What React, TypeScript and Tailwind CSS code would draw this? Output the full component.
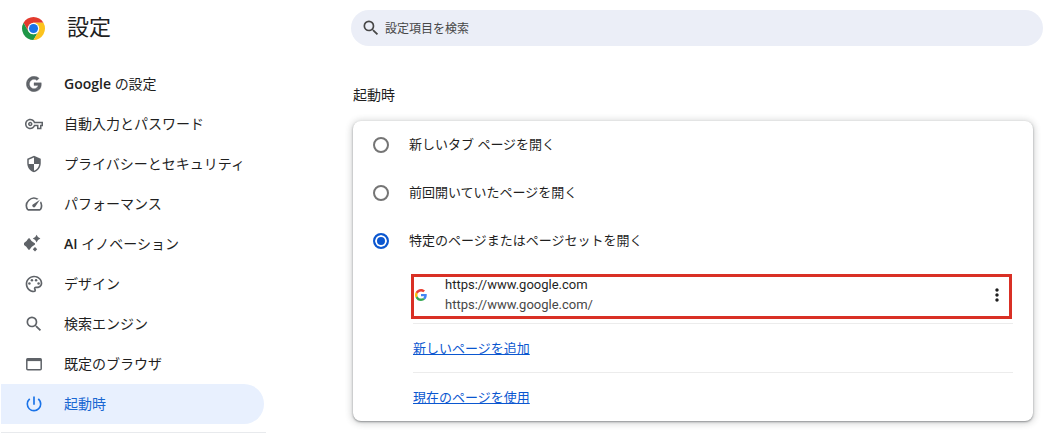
import React, { useState } from 'react';
import {
    MdMoreVert,
    MdOutlinePalette,
    MdOutlineVpnKey,
    MdPowerSettingsNew,
    MdSearch,
    MdSecurity,
    MdSpeed
} from 'react-icons/md';

const ChromeLogo: React.FC = () => (
    <svg viewBox="2 2 44 44" className="w-[23px] h-[23px] shrink-0" aria-hidden="true">
        <path fill="#e33b2e" d="M4.95 13A22 22 0 0 1 43.05 13H24L14.47 29.5z" />
        <path fill="#1e9647" d="M4.95 13L14.47 29.5A11 11 0 0 0 33.53 29.5L24 46A22 22 0 0 1 4.95 13z" />
        <path fill="#fcc31e" d="M43.05 13A22 22 0 0 1 24 46L33.53 29.5L24 13z" />
        <circle cx="24" cy="24" r="11" fill="#fff" />
        <circle cx="24" cy="24" r="8.7" fill="#1a73e8" />
    </svg>
);

const GoogleLogo: React.FC<{ mono?: boolean; className: string }> = ({ mono, className }) => (
    <svg
        viewBox={mono ? '-1 -1 50 50' : '0 0 48 48'}
        className={className}
        stroke={mono ? '#5f6368' : 'none'}
        strokeWidth="1"
        aria-hidden="true"
    >
        <path fill={mono ? '#5f6368' : '#EA4335'} d="M24 9.5c3.54 0 6.71 1.22 9.21 3.6l6.85-6.85C35.9 2.38 30.47 0 24 0 14.62 0 6.51 5.38 2.56 13.22l7.98 6.19C12.43 13.72 17.74 9.5 24 9.5z" />
        <path fill={mono ? '#5f6368' : '#4285F4'} d="M46.98 24.55c0-1.57-.15-3.09-.38-4.55H24v9.02h12.94c-.58 2.96-2.26 5.48-4.78 7.18l7.73 6c4.51-4.18 7.09-10.36 7.09-17.65z" />
        <path fill={mono ? '#5f6368' : '#FBBC05'} d="M10.53 28.59c-.48-1.45-.76-2.99-.76-4.59s.27-3.14.76-4.59l-7.98-6.19C.92 16.46 0 20.12 0 24c0 3.88.92 7.54 2.56 10.78l7.97-6.19z" />
        <path fill={mono ? '#5f6368' : '#34A853'} d="M24 48c6.48 0 11.93-2.13 15.89-5.81l-7.73-6c-2.15 1.45-4.92 2.3-8.16 2.3-6.26 0-11.57-4.22-13.47-9.91l-7.98 6.19C6.51 42.62 14.62 48 24 48z" />
    </svg>
);

const SparkIcon: React.FC = () => (
    <svg viewBox="0 0 20 20" className="w-5 h-5" fill="currentColor" aria-hidden="true">
        <path d="M5 5.2Q6.8 8.7 10 10Q6.8 11.3 5 14.8Q3.2 11.3 0 10Q3.2 8.7 5 5.2z" stroke="currentColor" strokeWidth="2" strokeLinejoin="round" />
        <path d="M12.6 .8Q13.5 3.7 16.4 4.6Q13.5 5.5 12.6 8.4Q11.7 5.5 8.8 4.6Q11.7 3.7 12.6 .8z" />
        <path d="M11 13L13.2 15.2L11 17.4L8.8 15.2z" />
    </svg>
);

const BrowserIcon: React.FC = () => (
    <svg viewBox="0 0 20 20" className="w-5 h-5" aria-hidden="true">
        <rect x="2.8" y="4.8" width="14.4" height="10.9" rx="1" fill="none" stroke="currentColor" strokeWidth="1.5" />
        <path d="M2.8 4.5h14.4v2.6H2.8z" fill="currentColor" />
    </svg>
);

const menuItems = [
    { latin: 'Google ', label: 'の設定', icon: <GoogleLogo mono className="w-4 h-4" /> },
    { label: '自動入力とパスワード', icon: <MdOutlineVpnKey size={18} /> },
    { label: 'プライバシーとセキュリティ', icon: <MdSecurity size={18} /> },
    { label: 'パフォーマンス', icon: <MdSpeed size={20} /> },
    { latin: 'AI ', label: 'イノベーション', icon: <SparkIcon /> },
    { label: 'デザイン', icon: <MdOutlinePalette size={20} /> },
    { label: '検索エンジン', icon: <MdSearch size={20} /> },
    { label: '既定のブラウザ', icon: <BrowserIcon /> },
    { label: '起動時', icon: <MdPowerSettingsNew size={20} /> }
];

const startupOptions = [
    '新しいタブ ページを開く',
    '前回開いていたページを開く',
    '特定のページまたはページセットを開く'
];

const App: React.FC = () => {
    const [activeItem, setActiveItem] = useState('起動時');
    const [selected, setSelected] = useState(2);
    const [query, setQuery] = useState('');

    return (
        <div className="flex min-h-screen bg-white text-[#1f1f1f] font-['Open_Sans','Noto_Sans_CJK_JP',sans-serif]">
            {/* Sidebar */}
            <aside className="w-[266px] shrink-0">
                <div className="flex items-center gap-[22px] h-14 pl-[22px]">
                    <ChromeLogo />
                    <h1 className="pb-1 text-[22px] leading-8">設定</h1>
                </div>
                <nav className="mt-2 pb-2 ml-px border-b border-[#e8eaed]">
                    {menuItems.map((item) => (
                        <a
                            key={item.label}
                            href="#"
                            onClick={(e) => {
                                e.preventDefault();
                                setActiveItem(item.label);
                            }}
                            className={`flex items-center gap-5 h-10 mr-0.5 pl-[23px] rounded-r-full text-sm ${activeItem === item.label
                                ? 'bg-[#e8f0fe] text-[#1967d2]'
                                : 'text-[#1f1f1f]'
                                }`}
                        >
                            <span className={`flex w-5 shrink-0 justify-center ${activeItem === item.label ? 'text-[#1a73e8]' : 'text-[#5f6368]'}`}>
                                {item.icon}
                            </span>
                            <span>
                                {item.latin && <span className="font-semibold">{item.latin}</span>}
                                {item.label}
                            </span>
                        </a>
                    ))}
                </nav>
            </aside>

            {/* Content */}
            <main className="flex-1 pl-[85px] pr-0.5 pt-2.5">
                <label className="flex items-center gap-1 h-9 pl-2.5 pr-4 rounded-full bg-[#ebeef7] text-[#474747]">
                    <MdSearch size={20} className="shrink-0" />
                    <input
                        type="text"
                        value={query}
                        onChange={(e) => setQuery(e.target.value)}
                        placeholder="設定項目を検索"
                        aria-label="設定項目を検索"
                        className="flex-1 pt-0.5 bg-transparent text-xs outline-none placeholder:text-[#474747]"
                    />
                </label>

                <section className="ml-0.5 mr-2.5">
                    <h2 className="pt-[39px] pb-4 text-sm leading-5">起動時</h2>
                    <div className="pl-5 rounded-lg bg-white text-[13px] shadow-[0_1px_2px_rgba(60,64,67,0.5),0_1px_6px_2px_rgba(60,64,67,0.2)]">
                        {startupOptions.map((option, index) => (
                            <label key={option} className="flex items-center gap-5 h-12">
                                <input
                                    type="radio"
                                    name="startup"
                                    checked={selected === index}
                                    onChange={() => setSelected(index)}
                                    className="appearance-none w-4 h-4 rounded-full border-2 border-[#757575] checked:border-[#0b57d0] checked:bg-[#0b57d0] checked:shadow-[inset_0_0_0_2px_#fff]"
                                />
                                {option}
                            </label>
                        ))}

                        <div className="ml-[38px] mr-5 pt-[9px]">
                            <div className="flex items-center mr-px pl-px pr-0.5 pb-1 h-[45px] border-3 border-[#d93025]">
                                <GoogleLogo className="w-3 h-3 shrink-0" />
                                <div className="flex-1 ml-[18px] leading-5 font-[Roboto,sans-serif]">
                                    <p>https://www.google.com</p>
                                    <p className="text-[#474747]">https://www.google.com/</p>
                                </div>
                                <button type="button" aria-label="その他の操作">
                                    <MdMoreVert size={20} />
                                </button>
                            </div>
                            <div className="ml-0.5 mt-1 text-[#0b57d0]">
                                <div className="flex items-center h-[49px] pt-0.5 border-t border-[#ececec]">
                                    <a href="#" className="underline">新しいページを追加</a>
                                </div>
                                <div className="flex items-center h-[49px] pt-0.5 border-t border-[#ececec]">
                                    <a href="#" className="underline">現在のページを使用</a>
                                </div>
                            </div>
                        </div>
                    </div>
                </section>
            </main>
        </div>
    );
};

export default App;
